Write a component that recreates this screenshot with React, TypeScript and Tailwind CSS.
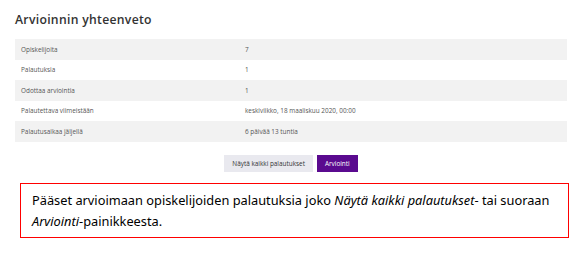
const rows: Array<[string, string]> = [
  ['Opiskelijoita', '7'],
  ['Palautuksia', '1'],
  ['Odottaa arviointia', '1'],
  ['Palautettava viimeistään', 'keskiviikko, 18 maaliskuu 2020, 00:00'],
  ['Palautusaikaa jäljellä', '6 päivää 13 tuntia'],
];

export default function App() {
  return (
    <div className="w-[582px] h-[258px] bg-white overflow-hidden font-['Open_Sans',sans-serif]">
      <div className="px-[15px] pt-[11px]">
        <h2 className="text-[12.2px] leading-[17px] font-semibold text-[#333] tracking-[0.3px]">
          Arvioinnin yhteenveto
        </h2>
        <div className="mt-[11px] w-[552px]">
          {rows.map(([label, value], i) => (
            <div
              key={label}
              className={`grid grid-cols-[224px_1fr] items-center text-[6.4px] text-[#555] ${
                i % 2 === 0 ? 'bg-[#f2f2f2] h-[21px]' : 'bg-white h-[20px]'
              }`}
            >
              <span className="px-[6px]">{label}</span>
              <span className="px-[6px]">{value}</span>
            </div>
          ))}
        </div>
      </div>

      <div className="mt-[13px] flex justify-center gap-[4px]">
        <button className="h-[17px] px-[8px] bg-[#e9e9ef] text-[6.4px] text-[#333]">
          Näytä kaikki palautukset
        </button>
        <button className="h-[17px] px-[8px] bg-[#5a0a8f] text-[6.4px] text-white">
          Arviointi
        </button>
      </div>

      <div className="mt-[11px] ml-[20px] w-[549px] h-[55px] border border-[#ff0000] pl-[11px] pt-[6px] font-['Noto_Sans',sans-serif] text-[12.8px] leading-[21px] text-black">
        Pääset arvioimaan opiskelijoiden palautuksia joko <i>Näytä kaikki palautukset</i>- tai suoraan{' '}
        <i>Arviointi</i>-painikkeesta.
      </div>
    </div>
  );
}
